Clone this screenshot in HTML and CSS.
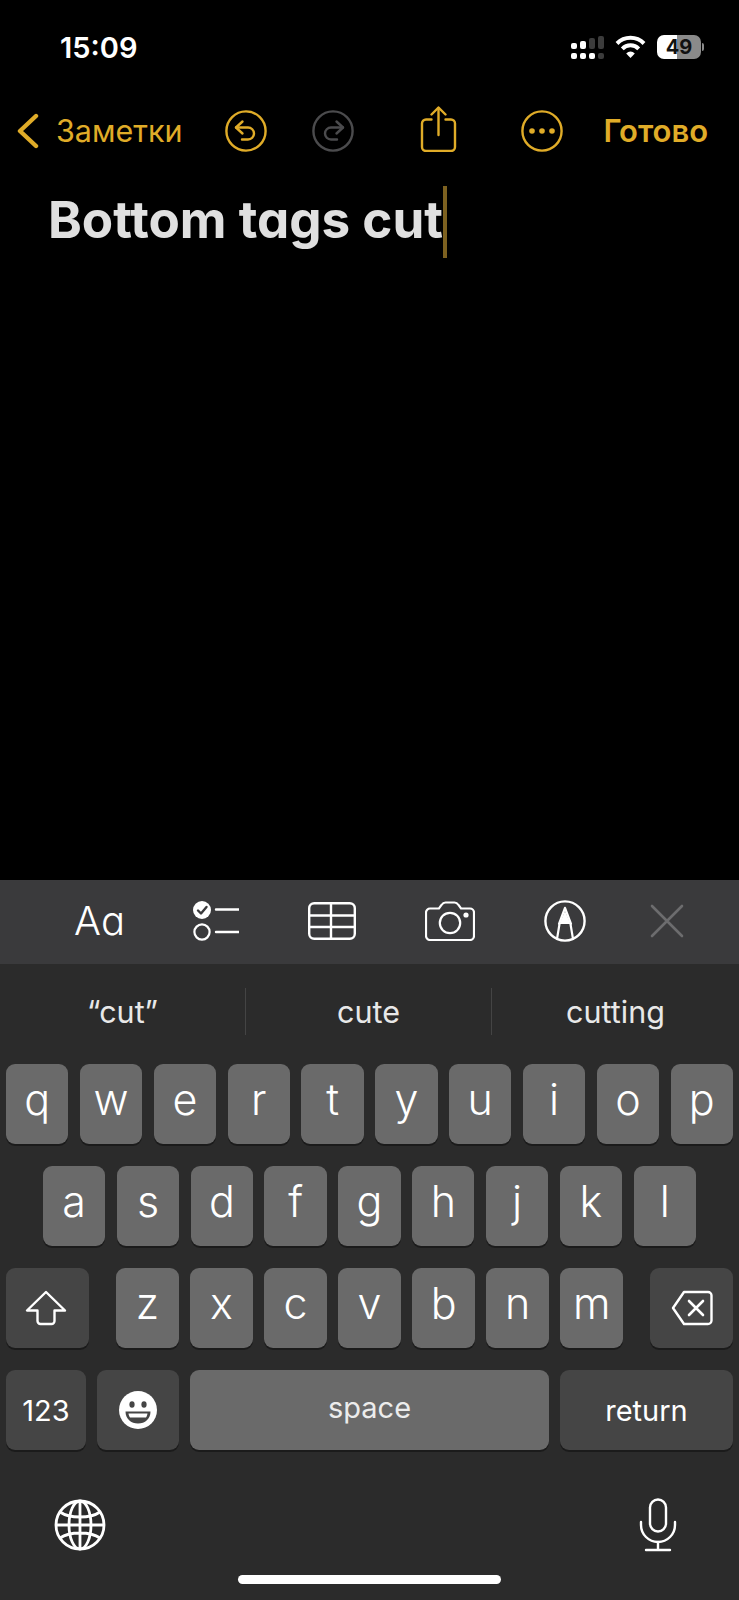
FILE: index.html
```html
<!DOCTYPE html>
<html lang="en">
<head>
  <meta charset="UTF-8" />
  <meta name="viewport" content="width=device-width, initial-scale=1.0" />
  <title>Bottom tags cut - Заметки</title>
  <link rel="stylesheet" href="styles.css">
</head>
<body>
<div class="screen">

  <div class="status-bar">
    <span class="time">15:09</span>
    <div class="status-icons">
      <svg class="signal" width="33" height="24" viewBox="0 0 33 24">
        <g fill="#fff">
          <rect x="0" y="8" width="6" height="6" rx="2"/>
          <rect x="9" y="6" width="6" height="8" rx="2"/>
          <rect x="0" y="18" width="6" height="6" rx="2"/>
          <rect x="9" y="18" width="6" height="6" rx="2"/>
          <rect x="18" y="18" width="6" height="6" rx="2"/>
        </g>
        <g fill="#3c3c3c">
          <rect x="18" y="3" width="6" height="11" rx="2"/>
          <rect x="27" y="1" width="6" height="13" rx="2"/>
          <rect x="27" y="18" width="6" height="6" rx="2"/>
        </g>
      </svg>
      <svg class="wifi" width="31" height="24" viewBox="0 0 31 24">
        <g fill="none" stroke="#fff" stroke-width="4">
          <path d="M2 8.500a19 19 0 0 1 27 0"/>
          <path d="M7.300 13.800a11.500 11.500 0 0 1 16.400 0"/>
        </g>
        <path d="M11.200 18.400a6 6 0 0 1 8.600 0L15.500 23z" fill="#fff"/>
      </svg>
      <div class="battery"><span>49</span></div>
    </div>
  </div>

  <div class="nav-bar">
    <svg class="back-chevron" width="22" height="36" viewBox="0 0 22 36">
      <path d="M19 3L3 18l16 15" fill="none" stroke="#e0ac28" stroke-width="4.400" stroke-linecap="round" stroke-linejoin="round"/>
    </svg>
    <span class="back-label">Заметки</span>
    <svg class="undo" width="42" height="42" viewBox="0 0 42 42">
      <g fill="none" stroke="#e0ac28" stroke-width="2.400" stroke-linecap="round" stroke-linejoin="round">
        <circle cx="21" cy="21" r="19.600"/>
        <path d="M17.500 11.500L11 17.500l6.500 6"/>
        <path d="M11 17.500h12a6 6 0 0 1 0 12h-6"/>
      </g>
    </svg>
    <svg class="redo" width="42" height="42" viewBox="0 0 42 42">
      <g fill="none" stroke="#4b4b4d" stroke-width="2.400" stroke-linecap="round" stroke-linejoin="round">
        <circle cx="21" cy="21" r="19.600"/>
        <path d="M24.500 11.500l6.500 6-6.500 6"/>
        <path d="M31 17.500H19a6 6 0 0 0 0 12h6"/>
      </g>
    </svg>
    <svg class="share" width="37" height="46" viewBox="0 0 37 46">
      <g fill="none" stroke="#e0ac28" stroke-width="2.400" stroke-linecap="round" stroke-linejoin="round">
        <path d="M11.500 13.500H6a4 4 0 0 0-4 4V41a4 4 0 0 0 4 4h25a4 4 0 0 0 4-4V17.500a4 4 0 0 0-4-4h-5.500"/>
        <path d="M18.500 29V2"/>
        <path d="M11.500 8.500l7-7 7 7"/>
      </g>
    </svg>
    <svg class="more" width="42" height="42" viewBox="0 0 42 42">
      <circle cx="21" cy="21" r="19.600" fill="none" stroke="#e0ac28" stroke-width="2.400"/>
      <g fill="#e0ac28">
        <circle cx="11" cy="21" r="2.800"/>
        <circle cx="21" cy="21" r="2.800"/>
        <circle cx="31" cy="21" r="2.800"/>
      </g>
    </svg>
    <span class="done">Готово</span>
  </div>

  <div class="note">
    <h1 class="note-title">Bottom tags cut</h1><span class="caret"></span>
  </div>

  <div class="toolbar">
    <span class="format-btn">Aɑ</span>
    <svg width="46" height="40" viewBox="0 0 46 40">
      <circle cx="9" cy="9" r="9" fill="#fff"/>
      <path d="M5 9.500l3 3 5.500-6.500" fill="none" stroke="#3a3a3c" stroke-width="2.400" stroke-linecap="round" stroke-linejoin="round"/>
      <circle cx="9" cy="31" r="7.600" fill="none" stroke="#fff" stroke-width="2.200"/>
      <path d="M23 8.500h22.500M23 31h22.500" stroke="#fff" stroke-width="2.400" stroke-linecap="round"/>
    </svg>
    <svg width="48" height="38" viewBox="0 0 48 38">
      <g fill="none" stroke="#fff" stroke-width="2.400">
        <rect x="1.200" y="1.200" width="45.600" height="35.600" rx="5"/>
        <path d="M1.200 13.500h45.600M1.200 25h45.600M23 1.200v35.600"/>
      </g>
    </svg>
    <svg width="50" height="40" viewBox="0 0 50 40">
      <path d="M5 7.500h9l2.500-3.500c1-1.500 2.500-2.500 4-2.500h9c1.500 0 3 1 4 2.500L36 7.500h9a4 4 0 0 1 4 4V35a4 4 0 0 1-4 4H5a4 4 0 0 1-4-4V11.500a4 4 0 0 1 4-4z" fill="none" stroke="#fff" stroke-width="2.200"/>
      <circle cx="25" cy="22" r="10.200" fill="none" stroke="#fff" stroke-width="2.200"/>
      <circle cx="41" cy="14" r="2.600" fill="#fff"/>
    </svg>
    <svg width="42" height="42" viewBox="0 0 42 42">
      <circle cx="21" cy="21" r="19.600" fill="none" stroke="#fff" stroke-width="2.400"/>
      <path d="M21 11l-5.500 13h11z" fill="#fff"/>
      <path d="M15.500 24L13 39M26.500 24L29 39M21 8l-6 16M21 8l6 16" fill="none" stroke="#fff" stroke-width="2.200" stroke-linecap="round"/>
    </svg>
    <svg class="close-btn" width="34" height="34" viewBox="0 0 34 34">
      <path d="M2 2l30 30M32 2L2 32" stroke="#6c6c6e" stroke-width="2.600" stroke-linecap="round"/>
    </svg>
  </div>

  <div class="keyboard">
    <div class="suggestions">
      <span class="suggestion">“cut”</span>
      <span class="suggestion">cute</span>
      <span class="suggestion">cutting</span>
    </div>

    <div class="key-row">
      <div class="key">q</div><div class="key">w</div><div class="key">e</div><div class="key">r</div><div class="key">t</div>
      <div class="key">y</div><div class="key">u</div><div class="key">i</div><div class="key">o</div><div class="key">p</div>
    </div>
    <div class="key-row row-home">
      <div class="key">a</div><div class="key">s</div><div class="key">d</div><div class="key">f</div><div class="key">g</div>
      <div class="key">h</div><div class="key">j</div><div class="key">k</div><div class="key">l</div>
    </div>
    <div class="key-row row-shift">
      <div class="key key-dark key-side">
        <svg class="shift-icon" width="42" height="36" viewBox="0 0 42 36">
          <path d="M21 2L2 20.500h10.500V31a3 3 0 0 0 3 3h11a3 3 0 0 0 3-3V20.500H40z" fill="none" stroke="#fff" stroke-width="2.400" stroke-linejoin="round"/>
        </svg>
      </div>
      <div class="letters">
        <div class="key">z</div><div class="key">x</div><div class="key">c</div><div class="key">v</div>
        <div class="key">b</div><div class="key">n</div><div class="key">m</div>
      </div>
      <div class="key key-dark key-side">
        <svg width="42" height="36" viewBox="0 0 42 36">
          <path d="M13 2h24a3.500 3.500 0 0 1 3.500 3.500v25A3.500 3.500 0 0 1 37 34H13L2 18z" fill="none" stroke="#fff" stroke-width="2.400" stroke-linejoin="round"/>
          <path d="M18 11l14 14M32 11L18 25" stroke="#fff" stroke-width="2.600" stroke-linecap="round"/>
        </svg>
      </div>
    </div>
    <div class="key-row row-bottom">
      <div class="key key-dark key-num">123</div>
      <div class="key key-dark key-emoji">
        <svg width="38" height="38" viewBox="0 0 38 38">
          <circle cx="19" cy="19" r="19" fill="#fff"/>
          <ellipse cx="13" cy="13.500" rx="2.600" ry="3.200" fill="#454545"/>
          <ellipse cx="25" cy="13.500" rx="2.600" ry="3.200" fill="#454545"/>
          <path d="M6.500 20.500h25c0 7.500-5.500 12-12.500 12s-12.500-4.500-12.500-12z" fill="#454545"/>
          <path d="M9.500 22.500h19c-.3 1.800-.8 3-1.500 4h-16c-.7-1-1.300-2.200-1.500-4z" fill="#fff"/>
        </svg>
      </div>
      <div class="key key-space">space</div>
      <div class="key key-dark key-return">return</div>
    </div>

    <div class="kb-bottom">
      <svg width="52" height="52" viewBox="0 0 52 52">
        <g fill="none" stroke="#fff" stroke-width="2.800">
          <circle cx="26" cy="26" r="24"/>
          <ellipse cx="26" cy="26" rx="11" ry="24"/>
          <path d="M26 2v48M2 26h48M6 13c5 3.500 12.500 5 20 5s15-1.500 20-5M6 39c5-3.500 12.500-5 20-5s15 1.500 20 5"/>
        </g>
      </svg>
      <svg width="38" height="54" viewBox="0 0 38 54">
        <g fill="none" stroke="#fff" stroke-width="2.400" stroke-linecap="round">
          <rect x="11" y="1.500" width="16" height="32" rx="8"/>
          <path d="M2 24v3a17 17 0 0 0 34 0v-3"/>
          <path d="M19 44v8M7 52h24"/>
        </g>
      </svg>
    </div>
    <div class="home-bar"></div>
  </div>

</div>
</body>
</html>
```

FILE: styles.css
```css
* {
  box-sizing: border-box;
}
body {
  margin: 0;
  background-color: #000;
  font-family: Inter, 'Liberation Sans', sans-serif;
  color: #fff;
}
svg {
  display: block;
  flex-shrink: 0;
}
.screen {
  width: 739px;
  height: 1600px;
  display: flex;
  flex-direction: column;
  overflow: hidden;
}

/* status bar */
.status-bar {
  height: 94px;
  display: flex;
  align-items: center;
  justify-content: space-between;
  padding: 0 38px 0 60px;
}
.time {
  font-size: 29px;
  font-weight: 600;
}
.status-icons {
  display: flex;
  align-items: center;
  gap: 11px;
}
.battery {
  position: relative;
  width: 44px;
  height: 24px;
  border-radius: 7px;
  background: linear-gradient(90deg, #fff 46%, #8a8a8a 46%);
  color: #111;
  font-size: 20px;
  font-weight: 700;
  line-height: 24px;
  text-align: center;
}
.battery::after {
  content: "";
  position: absolute;
  right: -3px;
  top: 8px;
  width: 2px;
  height: 8px;
  border-radius: 0 2px 2px 0;
  background-color: #8a8a8a;
}

/* nav */
.nav-bar {
  height: 74px;
  display: flex;
  align-items: center;
  padding-left: 17px;
}
.back-label {
  margin-left: 17px;
  padding-bottom: 1px;
  font-size: 30.500px;
  color: #e0ac28;
}
.undo {
  margin-left: 43px;
}
.redo {
  margin-left: 45px;
}
.share {
  margin-left: 66px;
  margin-top: -4px;
}
.more {
  margin-left: 64px;
}
.done {
  margin-left: 40px;
  padding-bottom: 1px;
  font-size: 31px;
  font-weight: 600;
  color: #e0ac28;
}

/* note body */
.note {
  flex: 1;
  display: flex;
  align-items: flex-start;
  padding: 18px 0 0 48px;
}
.note-title {
  margin: 0;
  font-size: 51.200px;
  font-weight: 700;
  font-feature-settings: "cv11";
  line-height: 66px;
  color: #e0e0e0;
}
.caret {
  width: 4px;
  height: 72px;
  background-color: #7d6120;
}

/* format toolbar */
.toolbar {
  height: 84px;
  display: flex;
  align-items: center;
  gap: 69px;
  padding-left: 74px;
  padding-bottom: 2px;
  background-color: #3a3a3c;
}
.format-btn {
  width: 50px;
  font-size: 40px;
  font-weight: 300;
  line-height: 1;
  white-space: nowrap;
}
.close-btn {
  margin-left: -5px;
}

/* keyboard */
.keyboard {
  background-color: #2b2b2b;
}
.suggestions {
  height: 100px;
  display: grid;
  grid-template-columns: 245px 246px 1fr;
  align-items: center;
  padding-bottom: 5px;
}
.suggestion {
  height: 47px;
  font-size: 30.500px;
  line-height: 47px;
  text-align: center;
  color: #e8e8e8;
}
.suggestion + .suggestion {
  border-left: 1px solid #444;
}
.key-row {
  height: 80px;
  margin-bottom: 22px;
  display: flex;
  gap: 11.500px;
  padding: 0 6px;
}
.key {
  flex: 1;
  display: flex;
  align-items: center;
  justify-content: center;
  padding-bottom: 10px;
  border-radius: 9px;
  background-color: #6a6a6a;
  box-shadow: 0 2px 0 #1b1b1b;
  font-size: 43px;
  font-weight: 300;
}
.row-home {
  padding: 0 43px;
}
.letters {
  flex: 1;
  display: flex;
  gap: 11.500px;
  margin: 0 15.500px;
}
.key-dark {
  background-color: #454545;
}
.key-side {
  flex: none;
  width: 83px;
  padding-bottom: 0;
}
.shift-icon {
  margin-right: 3px;
}
.row-bottom {
  gap: 11px;
}
.row-bottom .key {
  flex: none;
  padding-bottom: 0;
  font-size: 29px;
  font-weight: 400;
}
.key-num {
  width: 80px;
}
.key-emoji {
  width: 82px;
}
.row-bottom .key-space {
  width: 359px;
  padding-bottom: 5px;
  color: #ececec;
}
.key-return {
  width: 173px;
}
.kb-bottom {
  display: flex;
  align-items: center;
  justify-content: space-between;
  padding: 26px 62px 0 54px;
  height: 80px;
}
.home-bar {
  width: 263px;
  height: 9px;
  margin: 23px auto 16px;
  border-radius: 5px;
  background-color: #fff;
}
```
